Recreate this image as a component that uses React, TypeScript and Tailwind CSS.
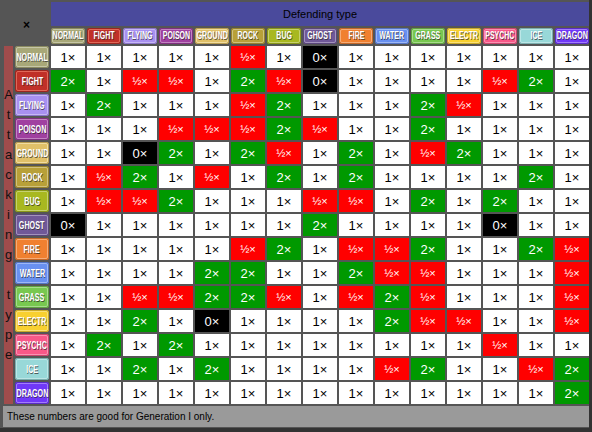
import React from 'react';

type TypeInfo = { name: string; bg: string; light: string; dark: string };

const TYPES: TypeInfo[] = [
  { name: 'NORMAL', bg: 'bg-[#a8a878]', light: 'border-[#c6c6a7]', dark: 'ring-[#8a8a60]' },
  { name: 'FIGHT', bg: 'bg-[#c03028]', light: 'border-[#e06858]', dark: 'ring-[#9a2620]' },
  { name: 'FLYING', bg: 'bg-[#a890f0]', light: 'border-[#c6b7f5]', dark: 'ring-[#8a74c8]' },
  { name: 'POISON', bg: 'bg-[#a040a0]', light: 'border-[#c183c1]', dark: 'ring-[#803080]' },
  { name: 'GROUND', bg: 'bg-[#e0c068]', light: 'border-[#f0dca0]', dark: 'ring-[#b89c50]' },
  { name: 'ROCK', bg: 'bg-[#b8a038]', light: 'border-[#d1c17d]', dark: 'ring-[#96822c]' },
  { name: 'BUG', bg: 'bg-[#a8b820]', light: 'border-[#c6d16e]', dark: 'ring-[#889618]' },
  { name: 'GHOST', bg: 'bg-[#705898]', light: 'border-[#a292bc]', dark: 'ring-[#5a467a]' },
  { name: 'FIRE', bg: 'bg-[#f08030]', light: 'border-[#f5ac78]', dark: 'ring-[#c46828]' },
  { name: 'WATER', bg: 'bg-[#6890f0]', light: 'border-[#9db7f5]', dark: 'ring-[#5474c4]' },
  { name: 'GRASS', bg: 'bg-[#78c850]', light: 'border-[#a7db8d]', dark: 'ring-[#60a240]' },
  { name: 'ELECTR', bg: 'bg-[#f8d030]', light: 'border-[#fae078]', dark: 'ring-[#c8a828]' },
  { name: 'PSYCHC', bg: 'bg-[#f85888]', light: 'border-[#fa92b2]', dark: 'ring-[#c8466e]' },
  { name: 'ICE', bg: 'bg-[#98d8d8]', light: 'border-[#bce6e6]', dark: 'ring-[#7aaeae]' },
  { name: 'DRAGON', bg: 'bg-[#7038f8]', light: 'border-[#a27dfa]', dark: 'ring-[#5a2cc8]' },
];

// attacker rows, defender columns (Gen I); 5 = half
const CHART: number[][] = [
  [1, 1, 1, 1, 1, 5, 1, 0, 1, 1, 1, 1, 1, 1, 1],
  [2, 1, 5, 5, 1, 2, 5, 0, 1, 1, 1, 1, 5, 2, 1],
  [1, 2, 1, 1, 1, 5, 2, 1, 1, 1, 2, 5, 1, 1, 1],
  [1, 1, 1, 5, 5, 5, 2, 5, 1, 1, 2, 1, 1, 1, 1],
  [1, 1, 0, 2, 1, 2, 5, 1, 2, 1, 5, 2, 1, 1, 1],
  [1, 5, 2, 1, 5, 1, 2, 1, 2, 1, 1, 1, 1, 2, 1],
  [1, 5, 5, 2, 1, 1, 1, 5, 5, 1, 2, 1, 2, 1, 1],
  [0, 1, 1, 1, 1, 1, 1, 2, 1, 1, 1, 1, 0, 1, 1],
  [1, 1, 1, 1, 1, 5, 2, 1, 5, 5, 2, 1, 1, 2, 5],
  [1, 1, 1, 1, 2, 2, 1, 1, 2, 5, 5, 1, 1, 1, 5],
  [1, 1, 5, 5, 2, 2, 5, 1, 5, 2, 5, 1, 1, 1, 5],
  [1, 1, 2, 1, 0, 1, 1, 1, 1, 2, 5, 5, 1, 1, 5],
  [1, 2, 1, 2, 1, 1, 1, 1, 1, 1, 1, 1, 5, 1, 1],
  [1, 1, 2, 1, 2, 1, 1, 1, 1, 5, 2, 1, 1, 5, 2],
  [1, 1, 1, 1, 1, 1, 1, 1, 1, 1, 1, 1, 1, 1, 2],
];

const font = "font-['Liberation_Sans',Arial,sans-serif]";

function Badge({ t, big }: { t: TypeInfo; big?: boolean }) {
  return (
    <div className={`${t.bg} rounded-[3px] p-[1px] ring-1 ring-inset ${t.dark}`}>
      <div className={`h-full rounded-[2px] border ${t.light} flex items-center justify-center`}>
        <span
          className={`inline-block shrink-0 ${font} font-bold text-white leading-none ${
            big ? 'text-[11px] scale-x-[0.65]' : 'text-[10px] scale-x-[0.7]'
          } [text-shadow:1px_1px_0_rgba(40,40,40,0.7)]`}
        >
          {t.name}
        </span>
      </div>
    </div>
  );
}

function Cell({ v }: { v: number }) {
  let cls = 'bg-white text-black text-[13px]';
  let label = '1×';
  if (v === 2) {
    cls = 'bg-[#009900] text-white text-[13px]';
    label = '2×';
  } else if (v === 5) {
    cls = 'bg-[#ff0000] text-white text-[11px]';
    label = '½×';
  } else if (v === 0) {
    cls = 'bg-black text-white text-[13px]';
    label = '0×';
  }
  return (
    <div className={`${cls} ${font} flex items-center justify-center leading-none`}>
      {label}
    </div>
  );
}

export default function App() {
  const letters = 'Attacking type'.split('');
  return (
    <div className="w-[592px] h-[432px] bg-[#333]">
      <div className="w-[589px] h-[428px] bg-[#555] pt-[2px] pl-[4px] flex flex-col gap-[2px]">
        <div className="grid grid-cols-[9px_34px_repeat(15,34px)] grid-rows-[24px_16px_repeat(15,22px)] gap-[2px]">
          <div className="col-span-2 row-span-2 flex items-center justify-center pt-[4px]">
            <span className={`${font} font-bold text-[12px] text-black leading-none`}>×</span>
          </div>
          <div className="col-span-15 bg-[#4a4a9c] flex items-center justify-center">
            <span className={`${font} text-[11px] text-black`}>Defending type</span>
          </div>
          {TYPES.map((t) => (
            <Badge key={'h' + t.name} t={t} />
          ))}
          <div className="col-start-1 row-start-3 row-span-15 bg-[#a04c4c] flex flex-col items-center justify-center">
            {letters.map((c, i) => (
              <div key={i} className={`h-[20px] leading-[20px] ${font} text-[13px] text-[#111]`}>
                {c === ' ' ? '\u00a0' : c}
              </div>
            ))}
          </div>
          {TYPES.map((t, r) => (
            <React.Fragment key={'r' + t.name}>
              <Badge t={t} big />
              {CHART[r].map((v, c) => (
                <Cell key={c} v={v} />
              ))}
            </React.Fragment>
          ))}
        </div>
        <div className="-ml-[1px] h-[21px] bg-[#9a9a9a] flex items-center pl-[4px]">
          <span className={`${font} text-[10px] text-black`}>These numbers are good for Generation I only.</span>
        </div>
      </div>
    </div>
  );
}
